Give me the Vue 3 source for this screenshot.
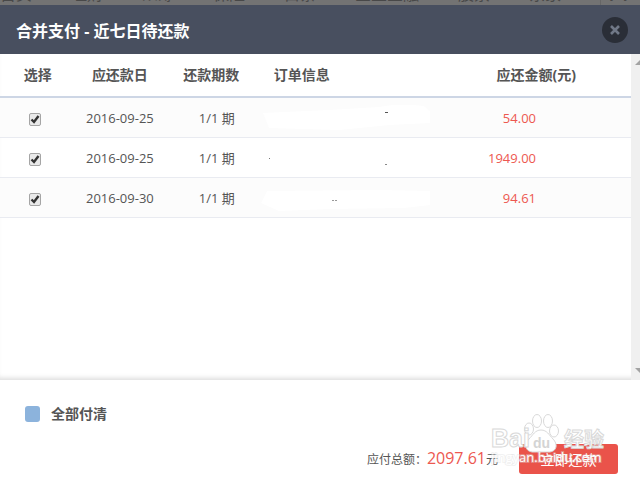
<template>
  <div class="page">
    <nav class="site-nav">
      <a v-for="item in navItems" :key="item" href="#">{{ item }}</a>
      <span class="site-name">JR.JD.COM</span>
    </nav>

    <main class="dialog">
      <header class="dialog-header">
        <h1 class="dialog-title">合并支付 - 近七日待还款</h1>
        <button class="close-button" aria-label="关闭">
          <svg viewBox="0 0 12 12" width="12" height="12">
            <path d="M2 2 L10 10 M10 2 L2 10" stroke="#707887" stroke-width="2.6" />
          </svg>
        </button>
      </header>

      <div class="list">
        <table class="bill-table">
          <thead>
            <tr>
              <th class="col-select">选择</th>
              <th class="col-date">应还款日</th>
              <th class="col-period">还款期数</th>
              <th class="col-order">订单信息</th>
              <th class="col-amount">应还金额(元)</th>
            </tr>
          </thead>
          <tbody>
            <tr v-for="bill in bills" :key="bill.id">
              <td class="col-select">
                <label class="check">
                  <input v-model="bill.checked" type="checkbox" :aria-label="'选择 ' + bill.date" />
                  <svg viewBox="0 0 10 10" width="10" height="10">
                    <path v-if="bill.checked" d="M1.5 5.5 L4 8 L8.5 2" fill="none" stroke="#333" stroke-width="2.4" />
                  </svg>
                </label>
              </td>
              <td>{{ bill.date }}</td>
              <td class="period">{{ bill.period }}</td>
              <td class="order">
                <svg viewBox="0 0 172 30" width="172" height="30">
                  <path :d="bill.patch" fill="#fff" />
                  <rect
                    v-for="(dot, i) in bill.dots"
                    :key="i"
                    :x="dot.x"
                    :y="dot.y"
                    :width="dot.w"
                    height="1"
                    :fill="dot.color"
                  />
                </svg>
              </td>
              <td class="amount">{{ bill.amount }}</td>
            </tr>
          </tbody>
        </table>
        <div class="scrollbar">
          <svg viewBox="0 0 9 6" width="9" height="6"><path d="M4 5 L9 0 V5 Z" fill="#a3a3a3" /></svg>
          <svg viewBox="0 0 9 6" width="9" height="6"><path d="M4 0 H9 V5 Z" fill="#a3a3a3" /></svg>
        </div>
      </div>

      <footer class="dialog-footer">
        <label class="pay-all">
          <input v-model="payAll" type="checkbox" />
          全部付清
        </label>
        <div class="pay-row">
          <p class="total">应付总额：<strong>2097.61</strong>元</p>
          <button class="pay-button">立即还款</button>
        </div>
        <svg class="watermark" viewBox="0 0 116 60" width="116" height="60">
          <g fill="#fff" stroke="#d9d9d9" stroke-width="1">
            <ellipse cx="46" cy="11" rx="4.5" ry="6.5" />
            <ellipse cx="57" cy="11" rx="4.5" ry="6.5" />
            <ellipse cx="38" cy="19" rx="4.5" ry="6" />
            <ellipse cx="63" cy="21" rx="4.5" ry="6" />
            <path d="M50 20 C56 20 58 25 62 29 C67 34 66 41 59 42 C54 42 46 42 41 42 C34 41 33 34 38 29 C42 25 44 20 50 20 Z" />
            <text x="0" y="37" class="mark-latin">Bai</text>
            <text x="73" y="37" class="mark-cjk">经验</text>
          </g>
          <text x="42" y="38" class="mark-du">du</text>
          <text x="0" y="52" class="mark-url">jingyan.baidu.com</text>
        </svg>
      </footer>
    </main>
  </div>
</template>

<script setup>
import { ref } from 'vue'

const navItems = ['首页', '理财', '众筹', '保险', '白条', '企业金融', '股票', '东家']

const payAll = ref(false)

const bills = ref([
  {
    id: 1,
    date: '2016-09-25',
    period: '1/1 期',
    amount: '54.00',
    checked: true,
    patch: 'M4 10 L70 7 L120 4 Q140 0 165 3 L171 8 V20 L130 22 L80 27 L10 25 Z',
    dots: [{ x: 126, y: 9, w: 3, color: '#555' }],
  },
  {
    id: 2,
    date: '2016-09-25',
    period: '1/1 期',
    amount: '1949.00',
    checked: true,
    patch: '',
    dots: [
      { x: 10, y: 15, w: 1, color: '#777' },
      { x: 126, y: 21, w: 2, color: '#888' },
    ],
  },
  {
    id: 3,
    date: '2016-09-30',
    period: '1/1 期',
    amount: '94.61',
    checked: true,
    patch: 'M8 8 L120 7 L171 8 V22 L145 25 L70 26 L20 28 L2 20 Z',
    dots: [
      { x: 73, y: 17, w: 2, color: '#999' },
      { x: 76, y: 17, w: 2, color: '#999' },
    ],
  },
])
</script>

<style>
body {
  margin: 0;
  background: #fff;
}
</style>

<style scoped>
.page {
  display: flex;
  flex-direction: column;
  min-height: 100vh;
  font-family: "Open Sans", "Noto Sans CJK SC", sans-serif;
  font-size: 13px;
  color: #555;
}

.site-nav {
  display: flex;
  align-items: flex-end;
  gap: 39px;
  height: 5px;
  overflow: hidden;
  background: #737373;
  font-size: 16px;
  line-height: 22px;
  white-space: nowrap;
}

.site-nav a {
  color: #484848;
  text-decoration: none;
}

.site-name {
  padding-left: 10px;
  border-left: 1px solid #666;
  font-size: 12px;
  color: #484848;
}

.dialog {
  display: flex;
  flex: 1;
  flex-direction: column;
  background: #fff;
}

.dialog-header {
  display: flex;
  align-items: center;
  justify-content: space-between;
  height: 49px;
  padding: 0 12px 0 16px;
  background: #484f5f;
}

.dialog-title {
  margin: 0;
  font-size: 16px;
  font-weight: bold;
  color: #fff;
}

.close-button {
  display: flex;
  align-items: center;
  justify-content: center;
  width: 26px;
  height: 26px;
  padding: 0;
  border: none;
  border-radius: 50%;
  background: #2a2e37;
  cursor: pointer;
}

.list {
  display: flex;
  flex: 1;
  align-items: flex-start;
  box-shadow: inset 0 -5px 5px -3px #ddd;
}

.bill-table {
  flex: 1;
  table-layout: fixed;
  border-collapse: collapse;
  text-align: center;
}

.bill-table th {
  height: 42px;
  padding: 0;
  border-bottom: 2px solid #cdd6e5;
  font-size: 14px;
  line-height: 20px;
}

.bill-table td {
  height: 39px;
  padding: 0;
  border-bottom: 1px solid #e9ebf1;
  line-height: 20px;
}

.bill-table tbody tr:nth-child(odd) {
  background: #fcfcfc;
}

.col-select {
  width: 12%;
}

.col-date {
  width: 14%;
}

.col-period {
  width: 15%;
}

.col-order {
  width: 29%;
}

.bill-table th.col-order {
  padding-left: 15px;
  text-align: left;
}

.bill-table td.col-select {
  padding-right: 5px;
}

.bill-table td.period {
  padding-left: 11px;
}

.bill-table td.amount {
  padding-right: 95px;
  text-align: right;
  color: #ed5850;
}

.order svg {
  display: block;
}

.check {
  display: inline-grid;
  vertical-align: middle;
}

.check input,
.check svg {
  grid-area: 1 / 1;
  place-self: center;
}

.check svg {
  pointer-events: none;
}

.check input {
  width: 12px;
  height: 13px;
  margin: 0;
  appearance: none;
  border: 1px solid #a5a5a5;
  border-radius: 2px;
  background: #e9e9e9;
}

.scrollbar {
  display: flex;
  flex-direction: column;
  align-self: stretch;
  justify-content: space-between;
  width: 9px;
  padding: 6px 0;
  box-sizing: border-box;
  background: #f0f0f0;
}

.dialog-footer {
  position: relative;
  padding: 24px 22px 6px 25px;
}

.pay-all {
  display: flex;
  align-items: center;
  gap: 11px;
  font-size: 14px;
  font-weight: bold;
  line-height: 20px;
}

.pay-all input {
  width: 15px;
  height: 16px;
  margin: 0;
  appearance: none;
  border-radius: 3px;
  background: #8cb3dc;
}

.pay-row {
  display: flex;
  align-items: center;
  justify-content: flex-end;
  gap: 21px;
  margin-top: 20px;
}

.total {
  margin: 0;
  font-size: 12px;
  line-height: 24px;
}

.total strong {
  font-size: 16px;
  font-weight: normal;
  color: #ed5850;
}

.pay-button {
  width: 99px;
  height: 30px;
  padding: 0;
  border: none;
  border-radius: 3px;
  background: #ea534a;
  color: #fff;
  font-family: inherit;
  font-size: 14px;
  cursor: pointer;
}

.watermark {
  position: absolute;
  right: 33px;
  bottom: 10px;
  pointer-events: none;
}

.mark-latin {
  font: bold 25px "Liberation Sans", sans-serif;
}

.mark-cjk {
  font: bold 20px "Noto Sans CJK SC", sans-serif;
}

.mark-du {
  font: bold 14px "Liberation Sans", sans-serif;
  fill: #d4d4d4;
}

.mark-url {
  font: 13px "Open Sans", sans-serif;
  fill: #fff;
  stroke: #ddd;
  stroke-width: 2px;
  stroke-opacity: 0.4;
  paint-order: stroke;
}
</style>
